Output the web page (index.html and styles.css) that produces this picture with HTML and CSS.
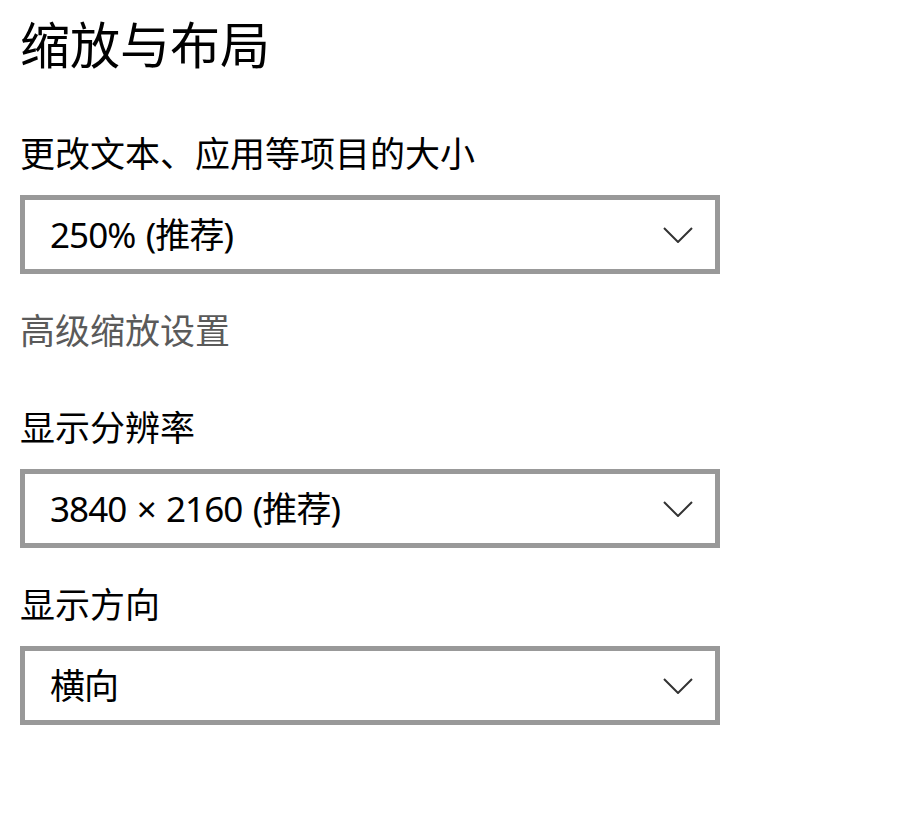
FILE: index.html
```html
<!DOCTYPE html>
<html lang="zh-CN">
<head>
    <meta charset="UTF-8">
    <meta name="viewport" content="width=device-width, initial-scale=1.0">
    <title>缩放与布局</title>
    <link rel="stylesheet" href="styles.css">
</head>
<body>
    <div class="page">
        <h1>缩放与布局</h1>

        <!-- 文本缩放 -->
        <div class="field first">
            <div class="label">更改文本、应用等项目的大小</div>
            <div class="combo">
                <span>250% (推荐)</span>
                <svg class="chevron" width="30" height="16" viewBox="0 0 30 16">
                    <polyline points="1,1 15,15 29,1" />
                </svg>
            </div>
        </div>

        <div class="link">高级缩放设置</div>

        <!-- 分辨率 -->
        <div class="field resolution">
            <div class="label">显示分辨率</div>
            <div class="combo">
                <span>3840 × 2160 (推荐)</span>
                <svg class="chevron" width="30" height="16" viewBox="0 0 30 16">
                    <polyline points="1,1 15,15 29,1" />
                </svg>
            </div>
        </div>

        <!-- 方向 -->
        <div class="field">
            <div class="label">显示方向</div>
            <div class="combo">
                <span>横向</span>
                <svg class="chevron" width="30" height="16" viewBox="0 0 30 16">
                    <polyline points="1,1 15,15 29,1" />
                </svg>
            </div>
        </div>
    </div>
</body>
</html>
```

FILE: styles.css
```css
* {
    box-sizing: border-box;
    margin: 0;
    padding: 0;
}

body {
    font-family: "Noto Sans", "Noto Sans CJK SC", sans-serif;
    background-color: #ffffff;
    color: #000000;
}

.page {
    padding: 0 20px;
}

h1 {
    font-size: 50px;
    font-weight: normal;
    line-height: 90px;
}

.field {
    margin-top: 32px;
}

.field.first {
    margin-top: 39px;
}

.field.resolution {
    margin-top: 47px;
}

.label,
.link {
    font-size: 35px;
    line-height: 50px;
}

.link {
    margin-top: 32px;
    color: #5a5a5a;
}

.combo {
    width: 700px;
    height: 79px;
    margin-top: 16px;
    border: 5px solid #999999;
    padding: 0 22px 4px 25px;
    display: flex;
    align-items: center;
    justify-content: space-between;
    font-size: 35px;
    letter-spacing: -0.9px;
    word-spacing: 2px;
}

.chevron {
    margin-top: 4px;
}

.chevron polyline {
    fill: none;
    stroke: #333333;
    stroke-width: 2;
}
```
